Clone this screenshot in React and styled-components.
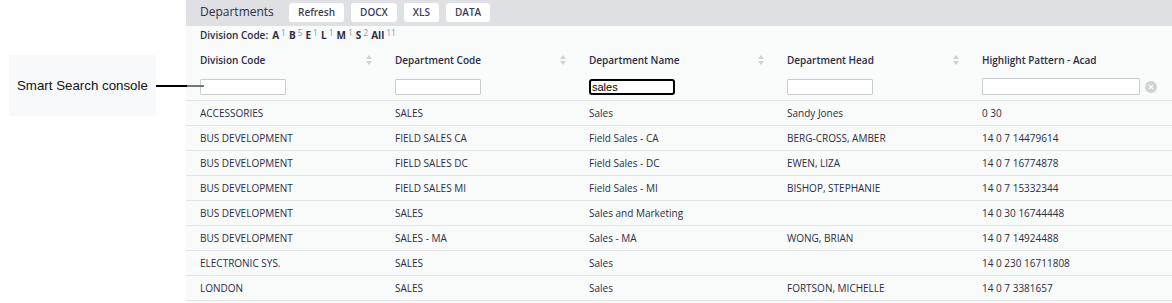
import React from "react";
import styled, { createGlobalStyle } from "styled-components";

const GlobalStyle = createGlobalStyle`
  body {
    margin: 0;
    background: #ffffff;
    font-family: "Open Sans", "Liberation Sans", sans-serif;
  }
`;

const columns = [
  { title: "Division Code", wide: false },
  { title: "Department Code", wide: false },
  { title: "Department Name", wide: false, value: "sales", focused: true },
  { title: "Department Head", wide: false },
  { title: "Highlight Pattern - Acad", wide: true, last: true },
];

const rows = [
  ["ACCESSORIES", "SALES", "Sales", "Sandy Jones", "0 30"],
  ["BUS DEVELOPMENT", "FIELD SALES CA", "Field Sales - CA", "BERG-CROSS, AMBER", "14 0 7 14479614"],
  ["BUS DEVELOPMENT", "FIELD SALES DC", "Field Sales - DC", "EWEN, LIZA", "14 0 7 16774878"],
  ["BUS DEVELOPMENT", "FIELD SALES MI", "Field Sales - MI", "BISHOP, STEPHANIE", "14 0 7 15332344"],
  ["BUS DEVELOPMENT", "SALES", "Sales and Marketing", "", "14 0 30 16744448"],
  ["BUS DEVELOPMENT", "SALES - MA", "Sales - MA", "WONG, BRIAN", "14 0 7 14924488"],
  ["ELECTRONIC SYS.", "SALES", "Sales", "", "14 0 230 16711808"],
  ["LONDON", "SALES", "Sales", "FORTSON, MICHELLE", "14 0 7 3381657"],
];

const letters = [
  ["A", 1],
  ["B", 5],
  ["E", 1],
  ["L", 1],
  ["M", 1],
  ["S", 2],
  ["All", 11],
];

function SortIcon() {
  return (
    <svg width="6" height="10" viewBox="0 0 6 10">
      <path d="M3 0 L6 4 L0 4 Z" fill="#cdd1d5" />
      <path d="M3 10 L6 6 L0 6 Z" fill="#cdd1d5" />
    </svg>
  );
}

function ClearIcon() {
  return (
    <ClearButton>
      <svg width="12" height="12" viewBox="0 0 12 12">
        <circle cx="6" cy="6" r="6" fill="#cfd1d3" />
        <path d="M4 4 L8 8 M8 4 L4 8" stroke="#ffffff" strokeWidth="1.2" />
      </svg>
    </ClearButton>
  );
}

export default function App() {
  return (
    <>
      <GlobalStyle />
      <Page>
        <Side>
          <Callout>
            <CalloutText>Smart Search console</CalloutText>
            <CalloutLine />
          </Callout>
        </Side>
        <Panel>
          <TitleBar>
            <Title>Departments</Title>
            <ToolButton>Refresh</ToolButton>
            <ToolButton>DOCX</ToolButton>
            <ToolButton>XLS</ToolButton>
            <ToolButton>DATA</ToolButton>
          </TitleBar>
          <LetterBar>
            <LetterLabel>Division Code:</LetterLabel>
            {letters.map(([l, n]) => (
              <Letter key={l}>
                {l}
                <Count>{n}</Count>
              </Letter>
            ))}
          </LetterBar>
          <Grid>
            {columns.map((c) => (
              <HeadCell key={c.title}>
                <span>{c.title}</span>
                {!c.last && <SortIcon />}
              </HeadCell>
            ))}
            {columns.map((c) => (
              <FilterCell key={c.title + "f"}>
                <FilterInput
                  $wide={c.wide}
                  $focused={c.focused}
                  defaultValue={c.value || ""}
                />
                {c.last && <ClearIcon />}
              </FilterCell>
            ))}
            {rows.map((r, i) =>
              r.map((v, j) => <Cell key={i + "-" + j}>{v}</Cell>)
            )}
          </Grid>
        </Panel>
      </Page>
    </>
  );
}

const Page = styled.div`
  display: flex;
  width: 1172px;
  height: 303px;
  overflow: hidden;
`;

const Side = styled.div`
  width: 186px;
  flex-shrink: 0;
  padding: 55px 0 0 9px;
  box-sizing: border-box;
  position: relative;
  z-index: 2;
`;

const Callout = styled.div`
  width: 147px;
  height: 61px;
  background: #f8f9fa;
  display: flex;
  align-items: center;
  padding-left: 8px;
  box-sizing: border-box;
`;

const CalloutText = styled.span`
  font-family: "Liberation Sans", Arial, sans-serif;
  font-size: 13.3px;
  color: #111111;
  white-space: nowrap;
`;

const CalloutLine = styled.div`
  width: 48px;
  height: 2px;
  margin-left: 8px;
  flex-shrink: 0;
  margin-top: 1px;
  background: linear-gradient(to right, #000 0, #000 31px, #777 31px, #777 48px);
`;

const Panel = styled.div`
  flex: 1;
  background: #f9fafa;
  color: #2b2d42;
`;

const TitleBar = styled.div`
  height: 26px;
  background: #dee0e3;
  display: flex;
  align-items: center;
  padding-left: 14px;
  gap: 7px;
`;

const Title = styled.div`
  font-size: 12px;
  font-weight: 500;
  width: 82px;
  margin-top: -3px;
  color: #2a2f4a;
`;

const ToolButton = styled.div`
  height: 19px;
  line-height: 19px;
  margin-top: -1px;
  padding: 0 9px;
  background: #ffffff;
  border-radius: 3px;
  font-size: 10px;
  font-weight: 600;
  color: #3a3f55;
`;

const LetterBar = styled.div`
  height: 18px;
  display: flex;
  align-items: center;
  padding: 0 0 0 14px;
  font-size: 10px;
  font-weight: 600;
`;

const LetterLabel = styled.span`
  margin-right: 4px;
`;

const Letter = styled.span`
  font-weight: 700;
  margin-right: 3px;
`;

const Count = styled.sup`
  font-size: 8.5px;
  font-weight: 400;
  color: #7f9cbf;
  margin-left: 2px;
  vertical-align: 3px;
  line-height: 0;
`;

const Grid = styled.div`
  display: grid;
  grid-template-columns: 195px 194px 198px 195px 1fr;
  margin-top: 3px;
`;

const HeadCell = styled.div`
  height: 26px;
  display: flex;
  align-items: center;
  justify-content: space-between;
  padding: 0 9px 0 14px;
  font-size: 10px;
  font-weight: 600;
  color: #2a2d45;
`;

const FilterCell = styled.div`
  height: 27px;
  display: flex;
  align-items: center;
  gap: 5px;
  padding: 0 0 0 14px;
  border-bottom: 1px solid #e2e4e6;
`;

const FilterInput = styled.input`
  box-sizing: border-box;
  width: ${(p) => (p.$wide ? "158px" : "86px")};
  height: ${(p) => (p.$wide ? "17px" : "16px")};
  border: ${(p) => (p.$focused ? "2px solid #000" : "1px solid #c9ccd1")};
  border-radius: ${(p) => (p.$focused ? "3px" : "1px")};
  background: #ffffff;
  padding: 0 0 0 1px;
  margin: 0;
  font-family: "Liberation Sans", Arial, sans-serif;
  font-size: 11px;
  color: #000;
  outline: none;
`;

const ClearButton = styled.span`
  display: flex;
  align-items: center;
`;

const Cell = styled.div`
  height: 24px;
  display: flex;
  align-items: center;
  padding-left: 14px;
  font-size: 10px;
  color: #2b2d42;
  border-bottom: 1px solid #e2e4e6;
  white-space: nowrap;
`;
